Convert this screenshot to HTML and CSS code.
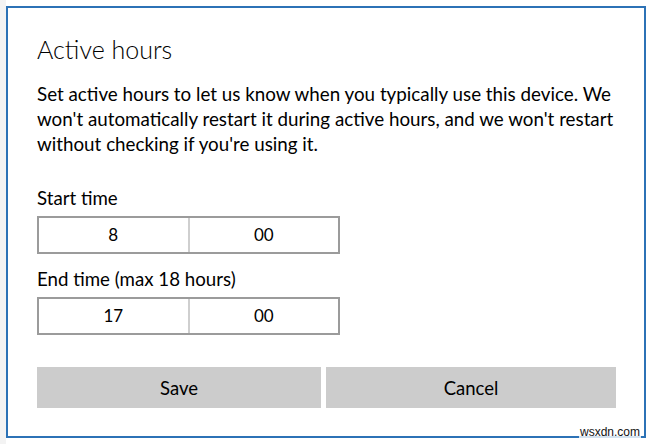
FILE: index.html
```html
<!DOCTYPE html>
<html lang="en">
<head>
  <meta charset="UTF-8" />
  <title>Active hours</title>
  <link rel="stylesheet" href="styles.css">
</head>
<body>

  <div class="dialog">
    <h1 class="title">Active hours</h1>
    <p class="desc">Set active hours to let us know when you typically use this device. We won't automatically restart it during active hours, and we won't restart without checking if you're using it.</p>

    <div class="label start-label">Start time</div>
    <div class="picker">
      <div class="cell">8</div>
      <div class="cell">00</div>
    </div>

    <div class="label end-label">End time (max 18 hours)</div>
    <div class="picker">
      <div class="cell">17</div>
      <div class="cell">00</div>
    </div>

    <div class="actions">
      <button class="btn save">Save</button>
      <button class="btn">Cancel</button>
    </div>

    <span class="mark">wsxdn.com</span>
  </div>

</body>
</html>
```

FILE: styles.css
```css
html, body {
  margin: 0;
  padding: 0;
}
body {
  width: 652px;
  height: 444px;
  background: linear-gradient(to right, #f3f3f3 6px, #fff 6px);
  font-family: Lato, "Open Sans", sans-serif;
  color: #000;
  overflow: hidden;
}
.dialog {
  position: relative;
  box-sizing: border-box;
  width: 640px;
  height: 432px;
  margin: 6px 0 0 6px;
  padding: 27px 27px 0 29px;
  border: 2px solid #2c72b6;
  background: #fff;
}
.title {
  margin: 0;
  font-size: 25px;
  font-weight: 300;
  line-height: 28px;
}
.desc {
  width: 600px;
  margin: 18px 0 0;
  font-size: 18.8px;
  line-height: 25px;
}
.label {
  font-size: 18.7px;
  line-height: 25px;
}
.start-label {
  margin-top: 30px;
}
.end-label {
  margin-top: 13px;
}
.picker {
  display: flex;
  box-sizing: border-box;
  width: 303px;
  height: 38px;
  margin-top: 5px;
  border: 2px solid #9b9b9b;
}
.cell {
  flex: 1;
  text-align: center;
  font-size: 17px;
  line-height: 34px;
}
.cell + .cell {
  border-left: 2px solid #cfcfcf;
}
.actions {
  display: flex;
  gap: 5px;
  width: 579px;
  margin-top: 32px;
}
.btn {
  flex: 1;
  height: 41px;
  border: none;
  background: #cccccc;
  font-family: inherit;
  font-size: 18.5px;
  color: #000;
  padding: 0;
}
.btn.save {
  flex: 0 0 284px;
}
.mark {
  position: absolute;
  right: 3px;
  bottom: -2px;
  padding: 0 1px;
  background: rgba(255,255,255,0.8);
  font-family: "Liberation Sans", sans-serif;
  font-size: 12px;
  line-height: 12px;
  color: #111;
}
```
